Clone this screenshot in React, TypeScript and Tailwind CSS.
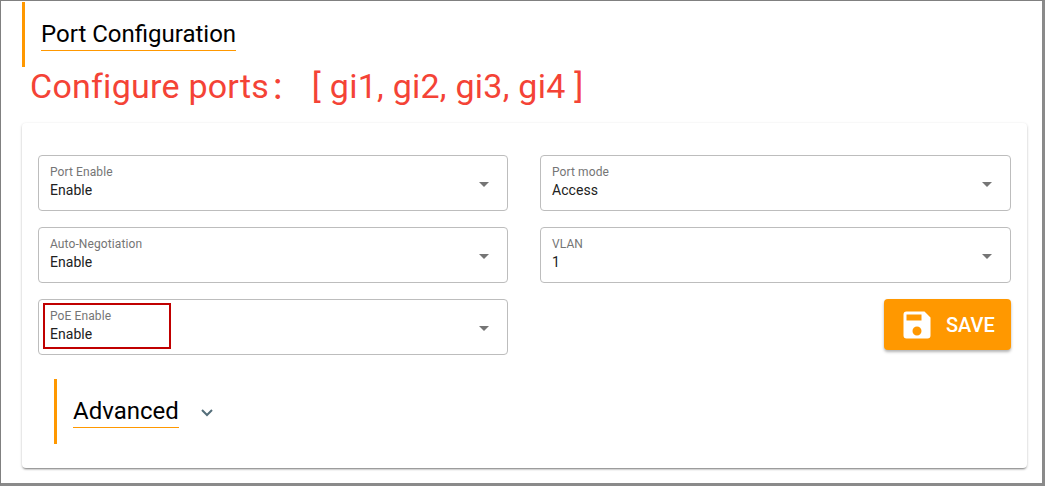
import React from 'react';

const Caret: React.FC = () => (
  <svg width="10" height="5" viewBox="0 0 10 5" className="absolute right-[18px] top-[26px]">
    <path d="M0 0h10L5 5z" fill="#757575" />
  </svg>
);

const Field: React.FC<{ label: string; value: string; highlight?: boolean }> = ({ label, value, highlight }) => (
  <div className="relative h-14 rounded border border-[#bdbdbd] bg-white pl-[11px] pt-[9px]">
    <div className="text-xs leading-[14px] tracking-[0.1px] text-[#757575]">{label}</div>
    <div className="mt-[3px] text-sm leading-4 tracking-[0.05px] text-[#212121]">{value}</div>
    <Caret />
    {highlight && <div className="absolute left-[4px] top-[3px] h-[46px] w-[128px] border-2 border-[#c00000]" />}
  </div>
);

export default function App() {
  return (
    <div className="h-[487px] w-[1046px] overflow-hidden bg-white font-['Roboto','Noto_Sans_CJK_SC',sans-serif]">
      <div className="h-[486px] w-[1045px] border-t border-l border-r-[3px] border-b-[3px] border-t-[#808080] border-l-[#808080] border-r-[#8a8a8a] border-b-[#8a8a8a] bg-white pl-[21px] pt-px">
        {/* header */}
        <div className="h-[65px] w-[1000px] border-l-[3px] border-[#ff9800] pl-4 pt-4">
          <span className="inline-block border-b border-[#ff9800] text-2xl leading-8 text-black">Port Configuration</span>
        </div>
        <div className="-mt-px ml-2 h-[57px] text-[34px] leading-[40px] tracking-[0.25px] text-[#f44336]">
          Configure ports<span className="inline-block w-[34px] pl-[1px] text-[30px]">：</span>&nbsp;[ gi1, gi2, gi3, gi4 ]
        </div>

        {/* card */}
        <div className="h-[345px] w-[1005px] rounded bg-white px-4 pt-8 shadow-[0_2px_2px_-1px_rgba(0,0,0,0.4),0_1px_3px_rgba(0,0,0,0.2)]">
          <div className="grid grid-cols-[470px_471px] gap-x-8 gap-y-4">
            <Field label="Port Enable" value="Enable" />
            <Field label="Port mode" value="Access" />
            <Field label="Auto-Negotiation" value="Enable" />
            <Field label="VLAN" value="1" />
            <Field label="PoE Enable" value="Enable" highlight />
            <div className="flex justify-end">
              <button className="flex h-[51px] w-[127px] items-center rounded bg-[#ff9800] pl-[15px] text-white shadow-[0_2px_3px_rgba(0,0,0,0.3)]">
                <svg width="36" height="36" viewBox="0 0 24 24" fill="currentColor">
                  <path d="M17 3H5a2 2 0 0 0-2 2v14a2 2 0 0 0 2 2h14a2 2 0 0 0 2-2V7l-4-4zm-5 16a3 3 0 1 1 0-6 3 3 0 0 1 0 6zm3-10H5V5h10v4z" />
                </svg>
                <span className="ml-[11px] text-xl font-medium leading-none">SAVE</span>
              </button>
            </div>
          </div>

          {/* advanced */}
          <div className="ml-4 mt-6 flex h-[65px] items-center border-l-[3px] border-[#ff9800] pl-4">
            <span className="inline-block border-b border-[#ff9800] text-2xl leading-8 text-black">Advanced</span>
            <svg width="24" height="24" viewBox="0 0 24 24" fill="none" stroke="#546e7a" strokeWidth="2" className="ml-4">
              <path d="M7 10l5 5 5-5" />
            </svg>
          </div>
        </div>
      </div>
    </div>
  );
}
